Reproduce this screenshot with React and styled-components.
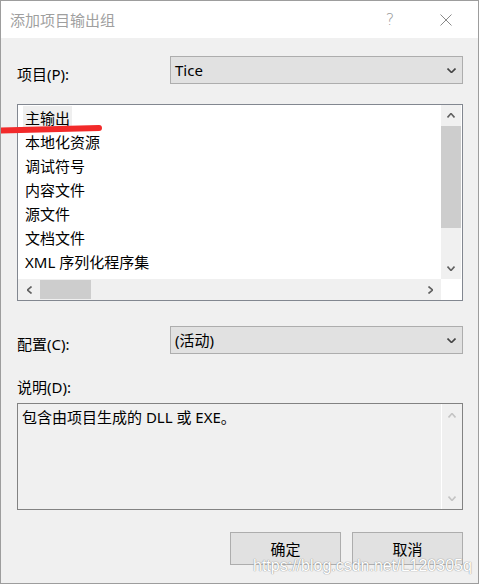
import React from 'react';
import styled, { createGlobalStyle } from 'styled-components';

const GlobalStyle = createGlobalStyle`
  html, body {
    margin: 0;
    padding: 0;
    background: #f0f0f0;
  }
  body {
    font-family: "Noto Sans", "Noto Sans CJK SC", sans-serif;
    font-size: 15px;
    color: #000;
  }
`;

const items = ['主输出', '本地化资源', '调试符号', '内容文件', '源文件', '文档文件', 'XML 序列化程序集'];

const Chevron = ({ dir = 'down', color = '#606060', w = 8, h = 5 }) => {
  const d = {
    down: `M0.5 0.5 L${w / 2} ${h - 0.5} L${w - 0.5} 0.5`,
    up: `M0.5 ${h - 0.5} L${w / 2} 0.5 L${w - 0.5} ${h - 0.5}`,
  }[dir];
  const rot = dir === 'left' || dir === 'right';
  if (rot) {
    const dd = dir === 'left'
      ? `M${h - 0.5} 0.5 L0.5 ${w / 2} L${h - 0.5} ${w - 0.5}`
      : `M0.5 0.5 L${h - 0.5} ${w / 2} L0.5 ${w - 0.5}`;
    return (
      <svg width={h} height={w} viewBox={`0 0 ${h} ${w}`}>
        <path d={dd} fill="none" stroke={color} strokeWidth="1.6" />
      </svg>
    );
  }
  return (
    <svg width={w} height={h} viewBox={`0 0 ${w} ${h}`}>
      <path d={d} fill="none" stroke={color} strokeWidth="1.6" />
    </svg>
  );
};

export default function App() {
  return (
    <>
      <GlobalStyle />
      <Window>
        <TitleBar>
          <Title>添加项目输出组</Title>
          <HelpButton>?</HelpButton>
          <CloseButton>
            <svg width="12" height="12" viewBox="0 0 12 12">
              <path d="M0.5 0.5 L11.5 11.5 M11.5 0.5 L0.5 11.5" stroke="#8a8a8a" strokeWidth="1" />
            </svg>
          </CloseButton>
        </TitleBar>

        <Body>
          <FieldRow $top={18}>
            <Label>项目(P):</Label>
            <Select>
              <span>Tice</span>
              <Chevron dir="down" color="#444" w={9} h={5} />
            </Select>
          </FieldRow>

          <ListBox>
            <Items>
              {items.map((item, i) => (
                <Item key={item}>
                  <ItemText $selected={i === 0}>{item}</ItemText>
                </Item>
              ))}
            </Items>
            <VScroll>
              <ArrowButton><Chevron dir="up" /></ArrowButton>
              <VThumb />
              <Spacer />
              <ArrowButton><Chevron dir="down" /></ArrowButton>
            </VScroll>
            <HScroll>
              <HArrow><Chevron dir="left" /></HArrow>
              <HThumb />
              <Spacer />
              <HArrow><Chevron dir="right" /></HArrow>
            </HScroll>
            <Corner />
          </ListBox>

          <FieldRow $top={25}>
            <Label>配置(C):</Label>
            <Select>
              <span>(活动)</span>
              <Chevron dir="down" color="#444" w={9} h={5} />
            </Select>
          </FieldRow>

          <PlainLabel>说明(D):</PlainLabel>
          <DescBox>
            <DescText>包含由项目生成的 DLL 或 EXE。</DescText>
            <DescScroll>
              <ArrowButton><Chevron dir="up" color="#c4c4c4" /></ArrowButton>
              <Spacer />
              <ArrowButton><Chevron dir="down" color="#c4c4c4" /></ArrowButton>
            </DescScroll>
          </DescBox>

          <Buttons>
            <Button>确定</Button>
            <Button>取消</Button>
          </Buttons>
        </Body>

        <RedMark width="108" height="14" viewBox="0 0 108 14">
          <path d="M0 8.5 Q50 7.2 102 6" fill="none" stroke="#f22a2a" strokeWidth="6" strokeLinecap="round" />
        </RedMark>
        <Watermark>https://blog.csdn.net/L120305q</Watermark>
      </Window>
    </>
  );
}

const Window = styled.div`
  position: relative;
  width: 479px;
  height: 584px;
  box-sizing: border-box;
  border: 1px solid #9d9d9d;
  background: #f0f0f0;
  display: flex;
  flex-direction: column;
  overflow: hidden;
`;

const TitleBar = styled.div`
  height: 37px;
  background: #fff;
  display: flex;
  align-items: center;
  padding-left: 9px;
  flex-shrink: 0;
`;

const Title = styled.div`
  flex: 1;
  color: #9f9f9f;
  font-family: "Noto Sans CJK SC", sans-serif;
  font-size: 15px;
  line-height: 20px;
`;

const HelpButton = styled.div`
  width: 46px;
  text-align: center;
  color: #9a9a9a;
  font-family: "DejaVu Sans", sans-serif;
  font-weight: 300;
  font-size: 16px;
  line-height: 20px;
`;

const CloseButton = styled.div`
  width: 65px;
  display: flex;
  justify-content: center;
  align-items: center;
`;

const Body = styled.div`
  padding: 0 15px 0 16px;
  display: flex;
  flex-direction: column;
`;

const FieldRow = styled.div`
  margin-top: ${p => p.$top}px;
  display: grid;
  grid-template-columns: 153px 1fr;
  align-items: center;
  height: 28px;
`;

const Label = styled.div`
  font-family: "Noto Sans", "Noto Sans CJK SC", sans-serif;
  line-height: 20px;
  margin-top: 7px;
`;

const Select = styled.div`
  box-sizing: border-box;
  height: 28px;
  background: #e1e1e1;
  border: 1px solid #adadad;
  display: flex;
  align-items: center;
  justify-content: space-between;
  padding: 0 6px 0 4px;
  line-height: 20px;
`;

const ListBox = styled.div`
  margin-top: 20px;
  box-sizing: border-box;
  height: 197px;
  border: 1px solid #828790;
  background: #fff;
  padding-right: 1px;
  display: grid;
  grid-template-columns: 1fr 20px;
  grid-template-rows: 1fr 21px;
`;

const Items = styled.div`
  padding: 1px 0 0 5px;
  overflow: hidden;
`;

const Item = styled.div`
  height: 24px;
  line-height: 24px;
  font-family: "Noto Sans", "Noto Sans CJK SC", sans-serif;
`;

const ItemText = styled.span`
  display: inline-block;
  padding: 0 2px;
  height: 23px;
  background: ${p => (p.$selected ? '#efefef' : 'transparent')};
`;

const VScroll = styled.div`
  background: #f0f0f0;
  display: flex;
  flex-direction: column;
`;

const ArrowButton = styled.div`
  height: 21px;
  display: flex;
  align-items: center;
  justify-content: center;
  flex-shrink: 0;
`;

const VThumb = styled.div`
  height: 102px;
  background: #cdcdcd;
`;

const Spacer = styled.div`
  flex: 1;
`;

const HScroll = styled.div`
  background: #f0f0f0;
  display: flex;
  align-items: stretch;
`;

const HArrow = styled.div`
  width: 22px;
  display: flex;
  align-items: center;
  justify-content: center;
`;

const HThumb = styled.div`
  width: 51px;
  margin: 1px 0;
  background: #cdcdcd;
`;

const Corner = styled.div`
  background: #fff;
`;

const PlainLabel = styled.div`
  margin-top: 22px;
  line-height: 22px;
`;

const DescBox = styled.div`
  margin-top: 5px;
  box-sizing: border-box;
  height: 107px;
  border: 1px solid #828282;
  background: #f0f0f0;
  display: grid;
  grid-template-columns: 1fr 21px;
`;

const DescText = styled.div`
  padding: 2px 0 0 4px;
  line-height: 22px;
`;

const DescScroll = styled.div`
  border-left: 1px solid #fff;
  display: flex;
  flex-direction: column;
  padding: 1px 0 0;
`;

const Buttons = styled.div`
  margin-top: 22px;
  display: flex;
  justify-content: flex-end;
  gap: 11px;
`;

const Button = styled.div`
  box-sizing: border-box;
  width: 111px;
  height: 33px;
  background: #e1e1e1;
  border: 1px solid #adadad;
  display: flex;
  align-items: center;
  justify-content: center;
  font-family: "Noto Sans CJK SC", sans-serif;
`;

const RedMark = styled.svg`
  position: absolute;
  left: -4px;
  top: 121px;
`;

const Watermark = styled.div`
  position: absolute;
  left: 252px;
  top: 555px;
  font-family: "Liberation Sans", Arial, sans-serif;
  font-size: 16px;
  line-height: 20px;
  color: #fff;
  text-shadow: 0 0 1px #8a8a8a, 0 0 1px #9a9a9a;
  white-space: nowrap;
`;
